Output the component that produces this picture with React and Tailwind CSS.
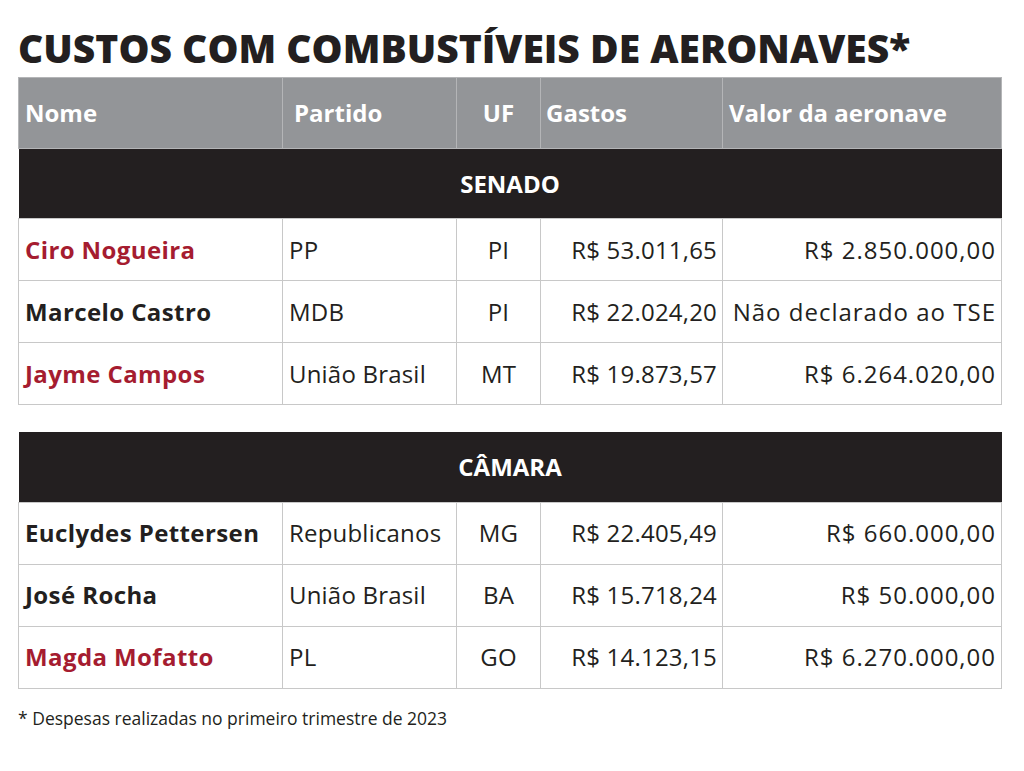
import React from "react";

const senado = [
  { nome: "Ciro Nogueira", red: true, partido: "PP", uf: "PI", gastos: "R$ 53.011,65", valor: "R$ 2.850.000,00" },
  { nome: "Marcelo Castro", red: false, partido: "MDB", uf: "PI", gastos: "R$ 22.024,20", valor: "Não declarado ao TSE" },
  { nome: "Jayme Campos", red: true, partido: "União Brasil", uf: "MT", gastos: "R$ 19.873,57", valor: "R$ 6.264.020,00" },
];

const camara = [
  { nome: "Euclydes Pettersen", red: false, partido: "Republicanos", uf: "MG", gastos: "R$ 22.405,49", valor: "R$ 660.000,00" },
  { nome: "José Rocha", red: false, partido: "União Brasil", uf: "BA", gastos: "R$ 15.718,24", valor: "R$ 50.000,00" },
  { nome: "Magda Mofatto", red: true, partido: "PL", uf: "GO", gastos: "R$ 14.123,15", valor: "R$ 6.270.000,00" },
];

function Cols() {
  return (
    <colgroup>
      <col className="w-[264px]" />
      <col className="w-[174px]" />
      <col className="w-[84px]" />
      <col className="w-[182px]" />
      <col className="w-[279px]" />
    </colgroup>
  );
}

function Rows({ data }) {
  return data.map((r) => (
    <tr key={r.nome} className="h-[62px] text-[24px] tracking-[0.2px] whitespace-nowrap">
      <td className={`border border-[#c8c8c8] pl-[6px] font-bold tracking-[0.4px] ${r.red ? "text-[#a51c30]" : "text-[#231f20]"}`}>
        {r.nome}
      </td>
      <td className="border border-[#c8c8c8] pl-[6px]">{r.partido}</td>
      <td className="border border-[#c8c8c8] text-center">{r.uf}</td>
      <td className="border border-[#c8c8c8] pr-[5px] text-right">{r.gastos}</td>
      <td className="border border-[#c8c8c8] pr-[5px] text-right tracking-[1px]">{r.valor}</td>
    </tr>
  ));
}

export default function App() {
  return (
    <div className="w-[1024px] h-[771px] bg-white px-[18px] pt-[25px] text-[#231f20] font-['Open_Sans',sans-serif]">
      <h1 className="text-[39px] font-extrabold leading-[46px] whitespace-nowrap">
        CUSTOS COM COMBUSTÍVEIS DE AERONAVES*
      </h1>

      {/* Senado */}
      <table className="mt-[6px] w-[983px] table-fixed border-collapse">
        <Cols />
        <thead>
          <tr className="h-[71px] bg-[#939598] text-left text-[24px] font-bold text-white">
            <th className="border border-[#b4b5b7] pl-[6px]">Nome</th>
            <th className="border border-[#b4b5b7] pl-[11px]">Partido</th>
            <th className="border border-[#b4b5b7] text-center">UF</th>
            <th className="border border-[#b4b5b7] pl-[5px]">Gastos</th>
            <th className="border border-[#b4b5b7] pl-[6px]">Valor da aeronave</th>
          </tr>
        </thead>
        <tbody>
          <tr className="h-[70px] bg-[#231f20]">
            <td colSpan={5} className="text-center text-[24px] font-bold text-white">SENADO</td>
          </tr>
          <Rows data={senado} />
        </tbody>
      </table>

      {/* Câmara */}
      <table className="mt-[27px] w-[983px] table-fixed border-collapse">
        <Cols />
        <tbody>
          <tr className="h-[70px] bg-[#231f20]">
            <td colSpan={5} className="text-center text-[24px] font-bold text-white">CÂMARA</td>
          </tr>
          <Rows data={camara} />
        </tbody>
      </table>

      <p className="mt-[16px] text-[17.5px] text-[#231f20]">* Despesas realizadas no primeiro trimestre de 2023</p>
    </div>
  );
}
